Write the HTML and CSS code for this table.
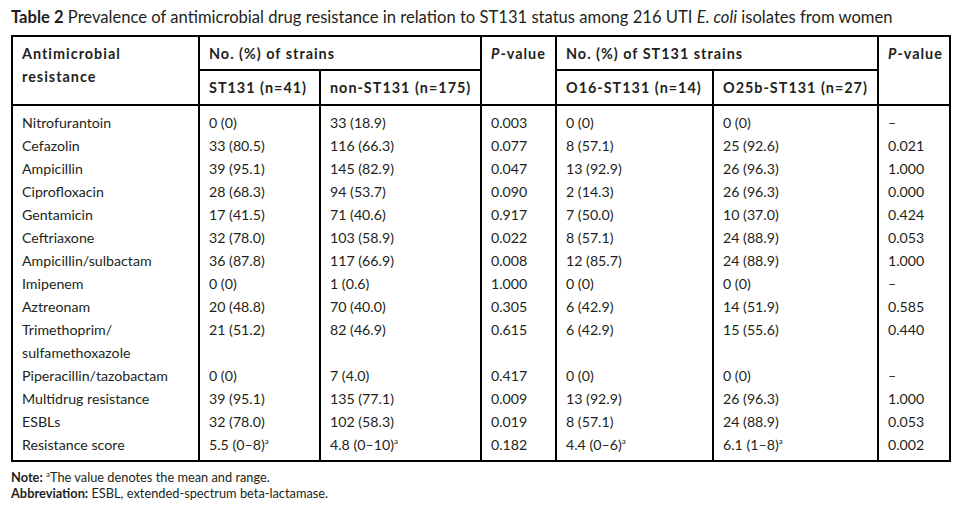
FILE: index.html
```html
<!DOCTYPE html>
<html lang="en">
<head>
<meta charset="utf-8">
<title>Table 2</title>
<link rel="stylesheet" href="styles.css">
</head>
<body>
<div class="page">
  <p class="caption"><b>Table 2</b> Prevalence of antimicrobial drug resistance in relation to ST131 status among 216 UTI <i>E. coli</i> isolates from women</p>
  <table class="data">
    <colgroup>
      <col class="w-drug"><col class="w-st"><col class="w-non"><col class="w-p"><col class="w-o16"><col class="w-o25"><col class="w-p2">
    </colgroup>
    <thead>
      <tr class="h1">
        <th rowspan="2">Antimicrobial<br>resistance</th>
        <th colspan="2">No. (%) of strains</th>
        <th rowspan="2"><i>P</i>-value</th>
        <th colspan="2">No. (%) of ST131 strains</th>
        <th rowspan="2"><i>P</i>-value</th>
      </tr>
      <tr class="h2">
        <th>ST131 (n=41)</th>
        <th>non-ST131 (n=175)</th>
        <th>O16-ST131 (n=14)</th>
        <th>O25b-ST131 (n=27)</th>
      </tr>
    </thead>
    <tbody>
      <tr class="first"><td>Nitrofurantoin</td><td>0 (0)</td><td>33 (18.9)</td><td>0.003</td><td>0 (0)</td><td>0 (0)</td><td>–</td></tr>
      <tr><td>Cefazolin</td><td>33 (80.5)</td><td>116 (66.3)</td><td>0.077</td><td>8 (57.1)</td><td>25 (92.6)</td><td>0.021</td></tr>
      <tr><td>Ampicillin</td><td>39 (95.1)</td><td>145 (82.9)</td><td>0.047</td><td>13 (92.9)</td><td>26 (96.3)</td><td>1.000</td></tr>
      <tr><td>Ciprofloxacin</td><td>28 (68.3)</td><td>94 (53.7)</td><td>0.090</td><td>2 (14.3)</td><td>26 (96.3)</td><td>0.000</td></tr>
      <tr><td>Gentamicin</td><td>17 (41.5)</td><td>71 (40.6)</td><td>0.917</td><td>7 (50.0)</td><td>10 (37.0)</td><td>0.424</td></tr>
      <tr><td>Ceftriaxone</td><td>32 (78.0)</td><td>103 (58.9)</td><td>0.022</td><td>8 (57.1)</td><td>24 (88.9)</td><td>0.053</td></tr>
      <tr><td>Ampicillin/sulbactam</td><td>36 (87.8)</td><td>117 (66.9)</td><td>0.008</td><td>12 (85.7)</td><td>24 (88.9)</td><td>1.000</td></tr>
      <tr><td>Imipenem</td><td>0 (0)</td><td>1 (0.6)</td><td>1.000</td><td>0 (0)</td><td>0 (0)</td><td>–</td></tr>
      <tr><td>Aztreonam</td><td>20 (48.8)</td><td>70 (40.0)</td><td>0.305</td><td>6 (42.9)</td><td>14 (51.9)</td><td>0.585</td></tr>
      <tr><td>Trimethoprim/<br>sulfamethoxazole</td><td>21 (51.2)</td><td>82 (46.9)</td><td>0.615</td><td>6 (42.9)</td><td>15 (55.6)</td><td>0.440</td></tr>
      <tr><td>Piperacillin/tazobactam</td><td>0 (0)</td><td>7 (4.0)</td><td>0.417</td><td>0 (0)</td><td>0 (0)</td><td>–</td></tr>
      <tr><td>Multidrug resistance</td><td>39 (95.1)</td><td>135 (77.1)</td><td>0.009</td><td>13 (92.9)</td><td>26 (96.3)</td><td>1.000</td></tr>
      <tr><td>ESBLs</td><td>32 (78.0)</td><td>102 (58.3)</td><td>0.019</td><td>8 (57.1)</td><td>24 (88.9)</td><td>0.053</td></tr>
      <tr class="last"><td>Resistance score</td><td>5.5 (0–8)<sup>a</sup></td><td>4.8 (0–10)<sup>a</sup></td><td>0.182</td><td>4.4 (0–6)<sup>a</sup></td><td>6.1 (1–8)<sup>a</sup></td><td>0.002</td></tr>
    </tbody>
  </table>
  <div class="notes">
    <p><b>Note:</b> <sup>a</sup>The value denotes the mean and range.</p>
    <p><b>Abbreviation:</b> ESBL, extended-spectrum beta-lactamase.</p>
  </div>
</div>
</body>
</html>
```

FILE: styles.css
```css
* { box-sizing: border-box; }
html, body { margin: 0; padding: 0; background: #fff; }
body {
  font-family: Lato, "Open Sans", "DejaVu Sans", sans-serif;
  color: #231f20;
}
.page {
  padding: 7px 0 0 11px;
}
.caption {
  margin: 0 0 8px 0;
  font-size: 16.6px;
  line-height: 20px;
  white-space: nowrap;
}
.caption b { font-weight: 700; }

.data {
  border-collapse: collapse;
  table-layout: fixed;
  width: 940px;
  font-size: 14.2px;
  line-height: 23px;
}
.w-drug { width: 187px; }
.w-st { width: 121px; }
.w-non { width: 161px; }
.w-p { width: 75px; }
.w-o16 { width: 157px; }
.w-o25 { width: 165px; }
.w-p2 { width: 72px; }

.data th, .data td {
  border-left: 2px solid #000;
  border-right: 2px solid #000;
  padding: 0 2px 0 9px;
  text-align: left;
  vertical-align: top;
  white-space: nowrap;
}
.data th {
  font-weight: 700;
  font-size: 14.4px;
  letter-spacing: 1px;
  border: 2px solid #000;
  padding-top: 5px;
  padding-bottom: 4px;
}
.data thead .h1 th { height: 34px; }
.data thead .h2 th { height: 35px; }
.data tbody tr.first td { padding-top: 5px; }
.data tbody tr.last td { padding-bottom: 4px; border-bottom: 2px solid #000; }
.data sup {
  font-size: 8px;
  line-height: 0;
  vertical-align: 6px;
}

.notes {
  margin-top: 7px;
  font-size: 12.8px;
  line-height: 16px;
}
.notes p { margin: 0; }
.notes sup {
  font-size: 8px;
  line-height: 0;
  vertical-align: 5px;
}
```
